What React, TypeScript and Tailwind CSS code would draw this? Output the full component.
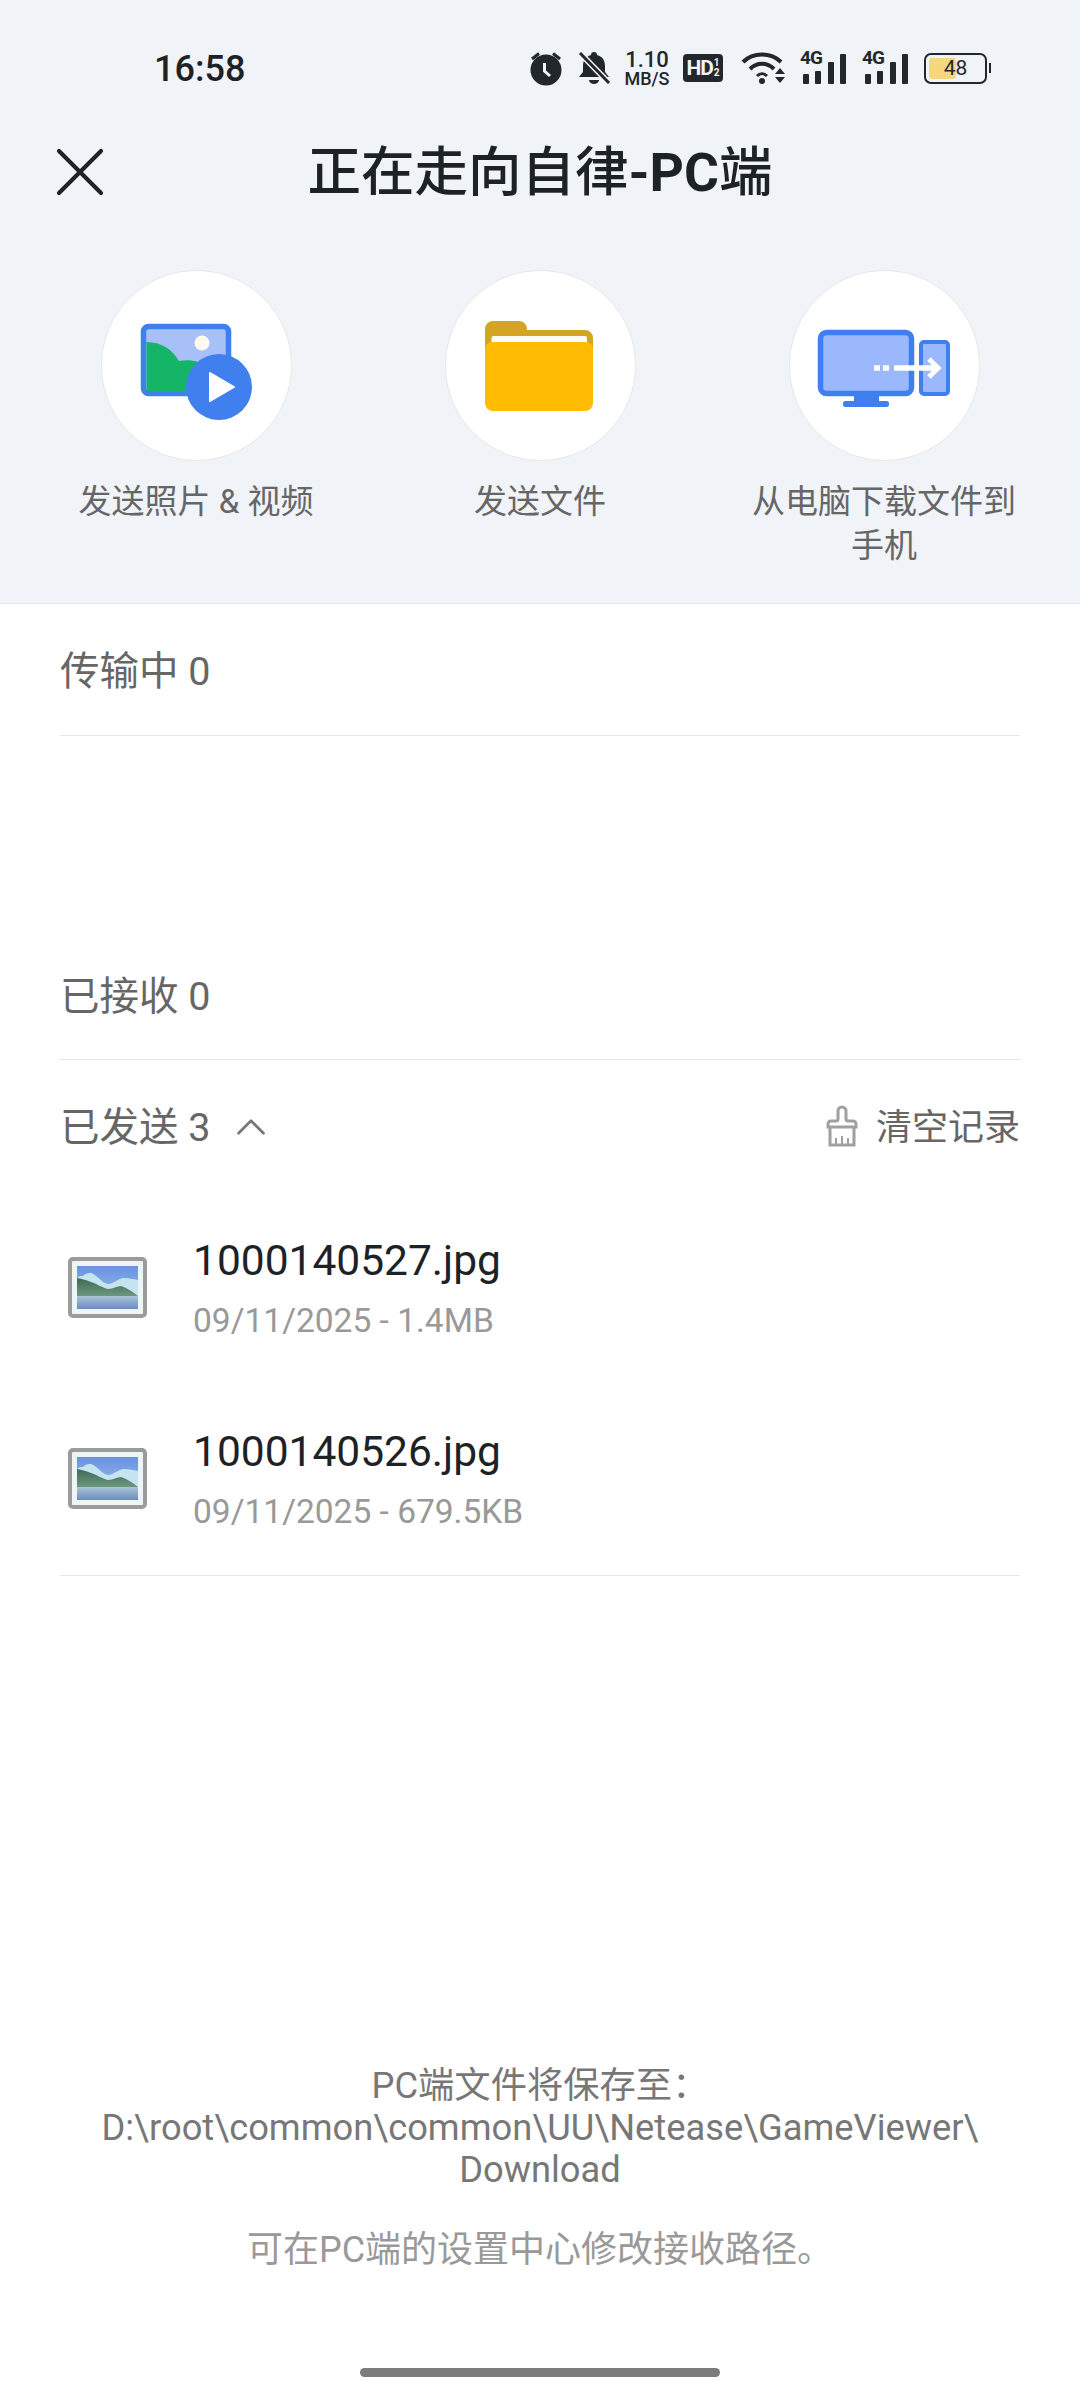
import React from 'react'
import { X, ChevronUp } from 'lucide-react'

function StatusIcons() {
  return (
    <div className="flex items-center text-[#22272b]">
      <svg width="34" height="36" viewBox="0 0 34 36" fill="currentColor">
        <circle cx="17" cy="20" r="15.5" />
        <path d="M3 9 L10 3.5 M31 9 L24 3.5" stroke="currentColor" strokeWidth="3" />
        <path d="M15.5 13 L15.5 21 L21 26" stroke="#f0f3f7" strokeWidth="3" fill="none" />
      </svg>
      <svg className="ml-[14px]" width="34" height="36" viewBox="0 0 34 36" fill="currentColor">
        <path d="M17 2 a3 3 0 0 1 3 3 c6 1.500 8 6 8 11 v6 l4 5 H2 l4 -5 v-6 c0 -5 2 -9.500 8 -11 a3 3 0 0 1 3 -3 z M12 30 h10 a5 4 0 0 1 -10 0 z" />
        <path d="M3 3 L32 33" stroke="#f0f3f7" strokeWidth="6" />
        <path d="M3 3 L32 33" stroke="currentColor" strokeWidth="3" />
      </svg>
      <div className="ml-[12px] w-[48px] flex flex-col items-center font-medium leading-none">
        <span className="text-[22px] leading-[20px]">1.10</span>
        <span className="text-[18px] leading-[17px]">MB/S</span>
      </div>
      <div className="ml-[12px] w-[40px] h-[28px] rounded-[4px] bg-[#22272b] text-[#f0f3f7] flex items-center justify-center font-bold">
        <span className="text-[21px] leading-none tracking-[-1px]">HD</span>
        <span className="flex flex-col text-[10px] leading-[10px] ml-[1px]">
          <span>1</span>
          <span>2</span>
        </span>
      </div>
      <svg className="ml-[18px]" width="46" height="34" viewBox="0 0 46 34" fill="none" stroke="currentColor" strokeWidth="4">
        <path d="M2 11 C12 1 30 1 40 11" />
        <path d="M9 18 C16 11 26 11 33 18" />
        <path d="M16 25 C19 22 23 22 26 25" strokeWidth="3" />
        <circle cx="21" cy="30" r="3" fill="currentColor" stroke="none" />
        <path d="M34 23 L39 17 L44 23 Z M34 26 L44 26 L39 32 Z" fill="currentColor" stroke="none" />
      </svg>
      <Signal className="ml-[13px]" />
      <Signal className="ml-[16px]" />
      <div className="ml-[16px] relative w-[63px] h-[31px] rounded-[7px] border-[2px] border-[#22272b] p-[3px]">
        <div className="w-[27px] h-full rounded-[3px] bg-[#f5d77e]" />
        <span className="absolute inset-0 flex items-center justify-center text-[21px] leading-none text-[#22272b]">48</span>
        <div className="absolute right-[-6px] top-[8px] w-[2px] h-[10px] bg-[#22272b]" />
      </div>
    </div>
  )
}

function Signal(props: { className: string }) {
  return (
    <div className={'relative w-[46px] h-[32px] ' + props.className}>
      <span className="absolute left-0 top-[-4px] text-[19px] leading-[20px] font-bold tracking-[-1px]">4G</span>
      <div className="absolute left-[3px] bottom-0 w-[6px] h-[10px] bg-current rounded-[1px]" />
      <div className="absolute left-[15px] bottom-0 w-[6px] h-[13px] bg-current rounded-[1px]" />
      <div className="absolute left-[28px] bottom-0 w-[6px] h-[22px] bg-current rounded-[1px]" />
      <div className="absolute left-[40px] bottom-0 w-[6px] h-[30px] bg-current rounded-[1px]" />
    </div>
  )
}

function PhotoIcon() {
  return (
    <svg width="190" height="190" viewBox="0 0 190 190">
      <rect x="42.500" y="55.500" width="85" height="67" rx="5" fill="#a8c0f8" stroke="#4080ee" strokeWidth="5.500" />
      <circle cx="101" cy="72" r="7.500" fill="#fffaf0" />
      <path d="M45.500 71 C62 71 72 80 78 90 C88 88 100 90 106 96 L100 120 L45.500 120 Z" fill="#14b566" />
      <circle cx="118" cy="116" r="33" fill="#4080ee" />
      <path d="M109 102 L133 116 L109 130 Z" fill="#fff" stroke="#fff" strokeWidth="2" strokeLinejoin="round" />
    </svg>
  )
}

function FolderIcon() {
  return (
    <svg width="190" height="190" viewBox="0 0 190 190">
      <path d="M40 58 a8 8 0 0 1 8 -8 h26 a8 8 0 0 1 8 8 v1 h58 a8 8 0 0 1 8 8 v40 H40 Z" fill="#d4a522" />
      <rect x="46.500" y="65" width="95.500" height="10" rx="2" fill="#fffdf5" />
      <path d="M40 78 a7 7 0 0 1 7 -7 h94 a7 7 0 0 1 7 7 v54 a8 8 0 0 1 -8 8 H48 a8 8 0 0 1 -8 -8 Z" fill="#ffbc03" />
    </svg>
  )
}

function TransferIcon() {
  return (
    <svg width="190" height="190" viewBox="0 0 190 190">
      <rect x="31.500" y="61.500" width="91" height="61" rx="6" fill="#9ab8fb" stroke="#4080ee" strokeWidth="5.500" />
      <path d="M65 124 h25 v7 H65 Z" fill="#4080ee" />
      <rect x="54" y="130" width="46" height="6" rx="2.500" fill="#4080ee" />
      <rect x="132" y="71" width="27" height="52" rx="3" fill="#9ab8fb" stroke="#4080ee" strokeWidth="4" />
      <path d="M85 97 h6 M94 97 h6 M105 97 h43" stroke="#fff" strokeWidth="5.500" fill="none" />
      <path d="M140 88 L149 97 L140 106" stroke="#fff" strokeWidth="5" fill="none" />
    </svg>
  )
}

function BrushIcon() {
  return (
    <svg className="mb-[5px]" width="32" height="42" viewBox="0 0 32 42" fill="none" stroke="#a0a0a0" strokeWidth="3">
      <path d="M12 14 V6 a4 4 0 0 1 8 0 V14 a2 2 0 0 0 2 2 h5 a3 3 0 0 1 3 3 v3 H2 v-3 a3 3 0 0 1 3 -3 h5 a2 2 0 0 0 2 -2 z" />
      <path d="M4 22 V40 H28 V22" />
      <path d="M10 40 V33 M16 40 V31 M22 40 V33" strokeWidth="2" />
    </svg>
  )
}

function Thumb(props: { id: string }) {
  return (
    <div className="w-[79px] h-[61px] rounded-[5px] border-[4px] border-[#9b9b9b] bg-[#eef5f7] p-[5px] flex">
      <svg className="w-full h-full" viewBox="0 0 61 43" preserveAspectRatio="none">
        <defs>
          <linearGradient id={props.id + 'sky'} x1="0" y1="0" x2="0" y2="1">
            <stop offset="0" stopColor="#6a92e0" />
            <stop offset="1" stopColor="#8fb8e8" />
          </linearGradient>
          <linearGradient id={props.id + 'hill'} x1="0" y1="0" x2="0" y2="1">
            <stop offset="0" stopColor="#3f6b57" />
            <stop offset="1" stopColor="#6e9a80" />
          </linearGradient>
          <linearGradient id={props.id + 'lake'} x1="0" y1="0" x2="0" y2="1">
            <stop offset="0" stopColor="#a9c4d4" />
            <stop offset="1" stopColor="#6c8cc0" />
          </linearGradient>
        </defs>
        <rect width="61" height="30" fill={'url(#' + props.id + 'sky)'} />
        <path d="M0 12 C2 10 4 10 6 10 C9 7 11 7 14 7 C20 9 26 18 31 18 C37 18 41 12 47 12 C52 12 56 13 61 14 V30 H0 Z" fill="#c5e4ef" />
        <path d="M0 12 C5 13 10 14 14 16 C20 18 26 22 31 23 C36 23 40 20 44 20 C50 22 56 26 61 30 V31 H0 Z" fill={'url(#' + props.id + 'hill)'} />
        <rect y="30" width="61" height="13" fill={'url(#' + props.id + 'lake)'} />
      </svg>
    </div>
  )
}

function FileRow(props: { id: string; name: string; meta: string }) {
  return (
    <div className="h-[191px] flex items-center">
      <div className="ml-[8px] mb-[3px]">
        <Thumb id={props.id} />
      </div>
      <div className="ml-[46px] mb-[6px] flex flex-col">
        <span className="text-[42.500px] leading-[60px] text-[#1d2226]">{props.name}</span>
        <span className="text-[33.500px] leading-[40px] text-[#999] mt-[10px]">{props.meta}</span>
      </div>
    </div>
  )
}

function Action(props: { icon: React.ReactNode; label: string }) {
  return (
    <div className="flex flex-col items-center px-[30px]">
      <div className="w-[191px] h-[191px] rounded-full bg-white border border-[#e6e8ea] flex items-center justify-center shrink-0 [&>svg]:shrink-0">
        {props.icon}
      </div>
      <div className="mt-[19px] text-[33px] leading-[44px] text-[#666] text-center">{props.label}</div>
    </div>
  )
}

export default function App() {
  return (
    <div className="w-[1080px] h-[2400px] bg-white flex flex-col" style={{ fontFamily: 'Roboto, "Noto Sans CJK SC", sans-serif' }}>
      <div className="h-[604px] bg-[#f0f3f7] border-b border-[#e4e6e8] shrink-0">
        <div className="h-[136px] flex items-center justify-between pl-[154px] pr-[93px]">
          <span className="text-[36px] font-medium text-[#1d2226] mt-[2px]">16:58</span>
          <StatusIcons />
        </div>
        <div className="h-[76px] grid grid-cols-[1fr_auto_1fr] grid-rows-[76px] items-center">
          <X className="ml-[38px] mb-[4px]" size={84} strokeWidth={1.200} color="#1d2226" />
          <span className="text-[53.500px] font-medium leading-[72px] text-[#1d2226] mb-[2px]">
            正在走向自律<span className="font-bold">-PC</span>端
          </span>
        </div>
        <div className="grid grid-cols-3 px-[24px] mt-[58px]">
          <Action icon={<PhotoIcon />} label="发送照片 & 视频" />
          <Action icon={<FolderIcon />} label="发送文件" />
          <Action icon={<TransferIcon />} label="从电脑下载文件到手机" />
        </div>
      </div>

      <div className="px-[60px]">
        <div className="h-[132px] flex items-center border-b border-[#e8e8e8] text-[39.500px] text-[#666]"><span className="mt-[4px]">传输中 0</span></div>
        <div className="h-[196px]" />
        <div className="h-[128px] flex items-center border-b border-[#e8e8e8] text-[39.500px] text-[#666]"><span className="mt-[2px]">已接收 0</span></div>
        <div className="h-[133px] flex items-center justify-between">
          <div className="flex items-center text-[39.500px] text-[#666] mt-[3px]">
            已发送 3
            <ChevronUp className="ml-[15px] mb-[3px]" size={50} strokeWidth={1.300} color="#777" />
          </div>
          <div className="flex items-center text-[36px] text-[#666] mt-[3px]">
            <BrushIcon />
            <span className="ml-[18px]">清空记录</span>
          </div>
        </div>
        <div className="border-b border-[#e8e8e8]">
          <FileRow id="a" name="1000140527.jpg" meta="09/11/2025 - 1.4MB" />
          <FileRow id="b" name="1000140526.jpg" meta="09/11/2025 - 679.5KB" />
        </div>
      </div>

      <div className="mt-auto flex flex-col items-center">
        <div className="w-[900px] text-center text-[36.300px] leading-[42px] text-[#777] break-words">
          <div>PC端文件将保存至：</div>
          <div>D:\root\common\common\UU\Netease\GameViewer\ Download</div>
        </div>
        <div className="mt-[38px] text-[36px] leading-[43px] text-[#999]">可在PC端的设置中心修改接收路径。</div>
        <div className="mt-[96px] mb-[23px] w-[360px] h-[9px] rounded-full bg-[#7c7c7c]" />
      </div>
    </div>
  )
}
